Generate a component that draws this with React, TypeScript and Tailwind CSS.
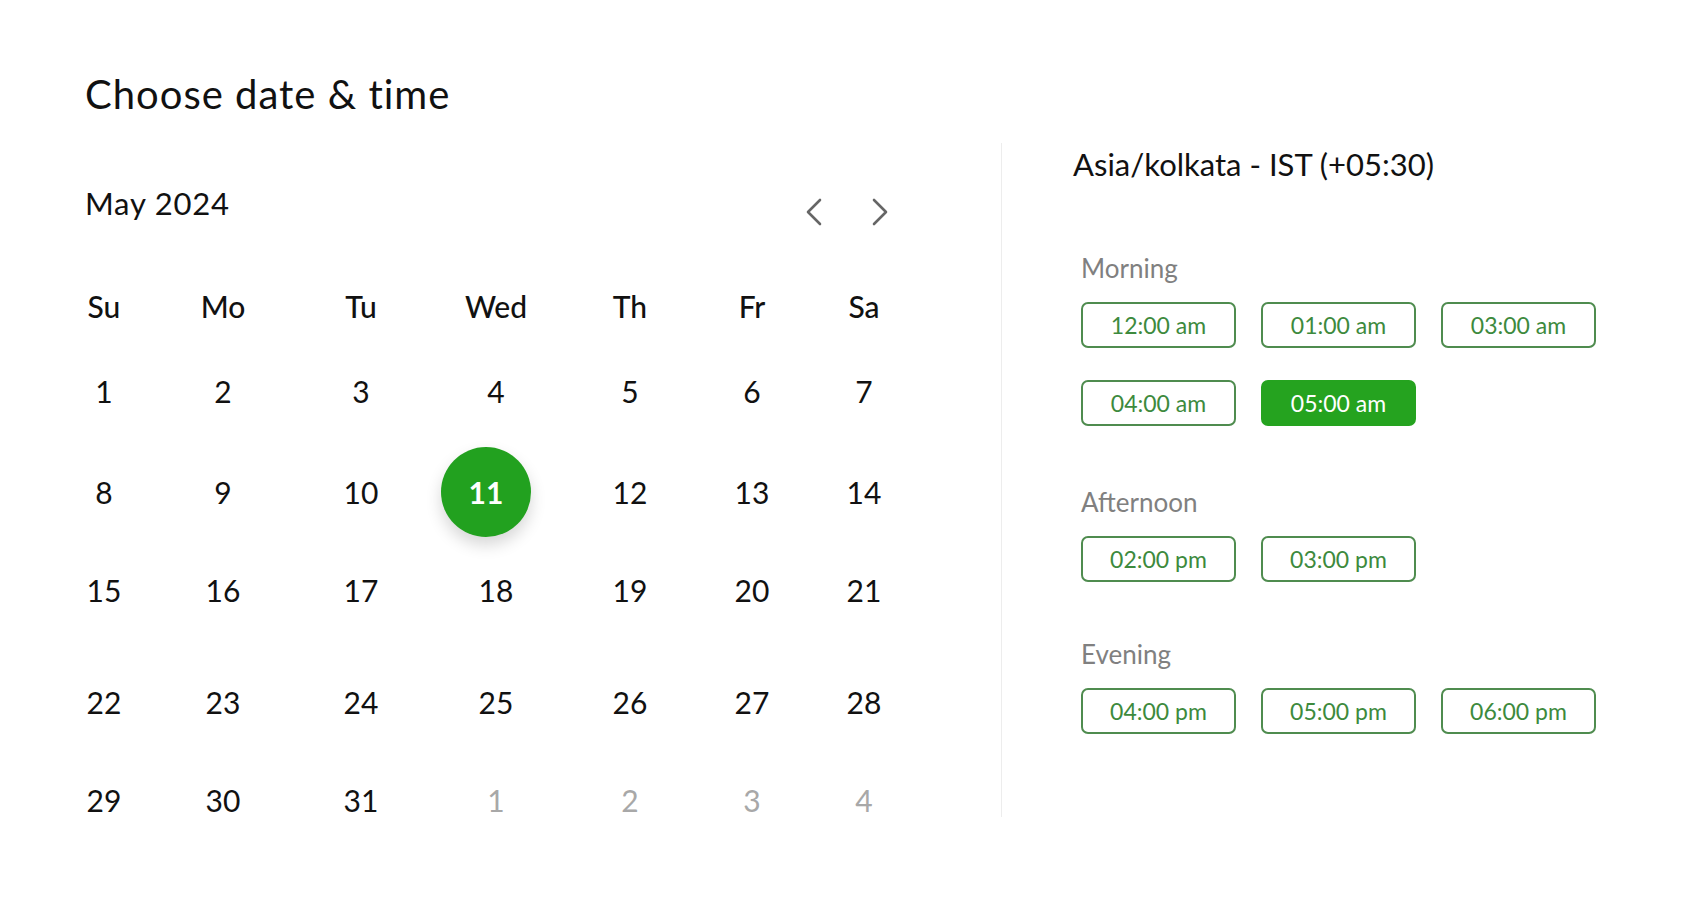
import React from "react";

const headers = ["Su", "Mo", "Tu", "Wed", "Th", "Fr", "Sa"];
const rows: { n: number; muted?: boolean }[][] = [
  [1, 2, 3, 4, 5, 6, 7].map((n) => ({ n })),
  [8, 9, 10, 11, 12, 13, 14].map((n) => ({ n })),
  [15, 16, 17, 18, 19, 20, 21].map((n) => ({ n })),
  [22, 23, 24, 25, 26, 27, 28].map((n) => ({ n })),
  [
    { n: 29 },
    { n: 30 },
    { n: 31 },
    { n: 1, muted: true },
    { n: 2, muted: true },
    { n: 3, muted: true },
    { n: 4, muted: true },
  ],
];

function Slot({ label, active }: { label: string; active?: boolean }) {
  return (
    <div
      className={
        active
          ? "w-[155px] h-[46px] rounded-[7px] border-2 border-[#25a31f] bg-[#25a31f] text-white flex items-center justify-center text-[23px] leading-none"
          : "w-[155px] h-[46px] rounded-[7px] border-2 border-[#4f8c4f] bg-white text-[#3d8a3d] flex items-center justify-center text-[23px] leading-none"
      }
    >
      {label}
    </div>
  );
}

function Section({
  title,
  slots,
  active,
  className,
}: {
  title: string;
  slots: string[];
  active?: string;
  className?: string;
}) {
  return (
    <div className={"flex flex-col " + (className ?? "")}>
      <div className="pl-[8px] text-[26px] leading-[32px] text-[#808080]">{title}</div>
      <div className="mt-[18px] pl-[8px] grid grid-cols-[155px_155px_155px] gap-x-[25px] gap-y-[32px]">
        {slots.map((s) => (
          <Slot key={s} label={s} active={s === active} />
        ))}
      </div>
    </div>
  );
}

export default function App() {
  return (
    <div className="w-[1700px] h-[910px] bg-white text-[#111] font-['Lato','Noto_Sans',sans-serif] pl-[85px] pt-[70px] overflow-hidden">
      <h1 className="text-[40px] leading-[48px] font-normal tracking-[1px]">Choose date &amp; time</h1>
      <div className="flex mt-[25px]">
        {/* Calendar */}
        <div className="w-[916px] flex flex-col">
          <div className="mt-[40px] w-[803px] flex items-start justify-between">
            <div className="text-[31px] leading-[40px] tracking-[0.8px]">May 2024</div>
            <div className="mt-[15px] flex gap-[50px]">
              <svg width="16" height="28" viewBox="0 0 16 28" fill="none">
                <polyline points="14,2 2,14 14,26" stroke="#666" strokeWidth="2.6" strokeLinecap="round" strokeLinejoin="round" />
              </svg>
              <svg width="16" height="28" viewBox="0 0 16 28" fill="none">
                <polyline points="2,2 14,14 2,26" stroke="#666" strokeWidth="2.6" strokeLinecap="round" strokeLinejoin="round" />
              </svg>
            </div>
          </div>
          <div className="mt-[40px] ml-[-36px] grid grid-cols-[110px_128px_148px_122px_146px_98px_126px] grid-rows-[80px_90px_112px_84px_140px_56px]">
            {headers.map((h) => (
              <div key={h} className="flex items-center justify-center text-[30px] font-medium">
                {h}
              </div>
            ))}
            {rows.flat().map((d, i) => (
              <div key={i} className="flex items-center justify-center">
                {d.n === 11 && !d.muted ? (
                  <div className="w-[90px] h-[90px] -translate-x-[10px] rounded-full bg-[#22a11f] text-white font-bold text-[30px] flex items-center justify-center shadow-[0_8px_16px_rgba(0,0,0,0.16)]">
                    11
                  </div>
                ) : (
                  <span className={d.muted ? "text-[30px] text-[#a8a8a8]" : "text-[30px] text-[#111]"}>{d.n}</span>
                )}
              </div>
            ))}
          </div>
        </div>
        {/* Divider */}
        <div className="w-px h-[674px] bg-[#ededed]" />
        {/* Times */}
        <div className="pl-[71px] pt-[1px] flex flex-col">
          <div className="text-[31px] leading-[40px]">Asia/kolkata - IST (+05:30)</div>
          <div className="mt-[68px] flex flex-col">
            <Section title="Morning" slots={["12:00 am", "01:00 am", "03:00 am", "04:00 am", "05:00 am"]} active="05:00 am" />
            <Section className="mt-[60px]" title="Afternoon" slots={["02:00 pm", "03:00 pm"]} />
            <Section className="mt-[56px]" title="Evening" slots={["04:00 pm", "05:00 pm", "06:00 pm"]} />
          </div>
        </div>
      </div>
    </div>
  );
}
